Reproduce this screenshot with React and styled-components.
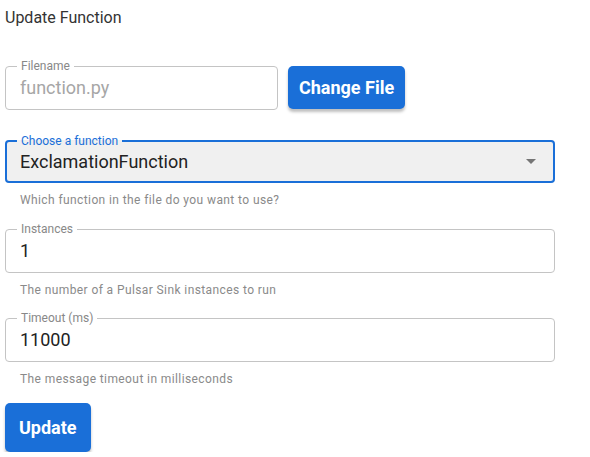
import React from 'react'
import styled, { createGlobalStyle } from 'styled-components'

const GlobalStyle = createGlobalStyle`
  body {
    margin: 0;
    background: #fff;
    font-family: Roboto, "Liberation Sans", sans-serif;
  }
`

const Page = styled.div`
  width: 590px;
  padding: 8px 5px 0 5px;
  box-sizing: border-box;
`

const Title = styled.div`
  font-size: 16px;
  line-height: 19px;
  color: #333;
  margin-bottom: 33px;
`

const Row = styled.div`
  display: flex;
  align-items: flex-start;
  gap: 10px;
`

const Field = styled.div`
  width: ${p => p.width || 550}px;
  margin-bottom: ${p => p.gap ?? 15}px;
`

const Box = styled.fieldset`
  margin: 0;
  min-width: 0;
  padding: 0 14px 5px 14px;
  border: ${p => (p.focused ? '2px solid #1a6fd8' : '1px solid #c4c4c4')};
  border-radius: 4px;
  background: ${p => (p.filled ? '#f0f0f0' : 'transparent')};
  display: flex;
  align-items: center;
  height: ${p => (p.focused ? 48 : 50)}px;
  box-sizing: border-box;
  padding-left: ${p => (p.focused ? 13 : 14)}px;
  padding-right: ${p => (p.focused ? 17 : 18)}px;
`

const Legend = styled.legend`
  font-size: 12px;
  line-height: 12px;
  padding: 0 4px;
  margin-left: -3px;
  color: ${p => (p.focused ? '#1a6fd8' : '#888')};
`

const Value = styled.div`
  flex: 1;
  font-size: 18px;
  line-height: 30px;
  color: ${p => (p.disabled ? '#a6a6a6' : '#222')};
`

const Arrow = styled.span`
  width: 0;
  height: 0;
  border-left: 5px solid transparent;
  border-right: 5px solid transparent;
  border-top: 5px solid #757575;
`

const Helper = styled.div`
  font-size: 12px;
  line-height: 14px;
  color: #8a8a8a;
  letter-spacing: 0.4px;
  padding: 10px 0 0 15px;
`

const Button = styled.button`
  border: none;
  background: #1a6fd8;
  color: #fff;
  font-family: Roboto, "Liberation Sans", sans-serif;
  font-weight: 700;
  font-size: 18px;
  height: ${p => p.h}px;
  padding: 0 ${p => p.px}px;
  border-radius: 5px;
  box-shadow: 0 3px 3px rgba(0, 0, 0, 0.25);
  margin-top: ${p => p.mt || 0}px;
`

const App = () => {
  return (
    <>
      <GlobalStyle />
      <Page>
        <Title>Update Function</Title>

        <Row>
          <Field width={273} gap={25}>
            <Box>
              <Legend>Filename</Legend>
              <Value disabled>function.py</Value>
            </Box>
          </Field>
          <Button h={43} px={11} mt={6}>Change File</Button>
        </Row>

        <Field gap={16}>
          <Box focused filled>
            <Legend focused>Choose a function</Legend>
            <Value>ExclamationFunction</Value>
            <Arrow />
          </Box>
          <Helper>Which function in the file do you want to use?</Helper>
        </Field>

        <Field>
          <Box>
            <Legend>Instances</Legend>
            <Value>1</Value>
          </Box>
          <Helper>The number of a Pulsar Sink instances to run</Helper>
        </Field>

        <Field gap={14}>
          <Box>
            <Legend>Timeout (ms)</Legend>
            <Value>11000</Value>
          </Box>
          <Helper>The message timeout in milliseconds</Helper>
        </Field>

        <Button h={49} px={14} mt={3}>Update</Button>
      </Page>
    </>
  )
}

export default App
